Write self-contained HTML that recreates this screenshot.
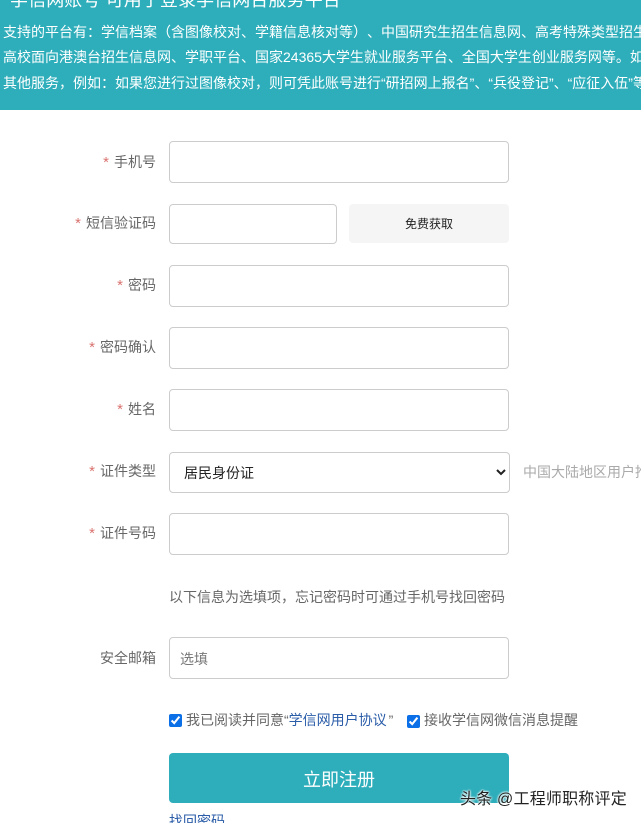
<!DOCTYPE html>
<html lang="zh"><head><meta charset="utf-8"><title>学信网注册</title>
<style>
html,body{margin:0;padding:0;background:#fff;width:641px;height:823px;overflow:hidden}
body{position:relative;font-family:"Liberation Sans","Noto Sans CJK SC",sans-serif;font-size:14px;color:#666;text-spacing-trim:space-all}
#p{position:absolute;left:0;top:0;width:641px;height:823px;overflow:hidden}
.hd{position:absolute;left:0;top:0;width:641px;height:110px;background:#2eaebb;overflow:hidden;color:#fff}
.hd div{position:absolute;left:3px;white-space:nowrap;line-height:20px}
.hd .t{left:10px;top:-10px;font-size:18px;letter-spacing:.1px}
.l{position:absolute;right:485px;white-space:nowrap;line-height:20px;color:#666}
.l i{font-style:normal;color:#d9736f;margin-right:5px;font-family:"Liberation Sans",sans-serif;font-size:15px}
.i{position:absolute;left:169px;width:338px;height:40px;border:1px solid #ccc;border-radius:4px;background:#fff}
.s{position:absolute;left:169px;top:452px;width:341px;height:41px;box-sizing:border-box;border:1px solid #ccc;border-radius:4px;background:#fff;color:#222;font:14px "Liberation Sans","Noto Sans CJK SC",sans-serif;padding:1px 0 0 10px}
.x{position:absolute;white-space:nowrap;line-height:20px}
input[type=checkbox]{position:absolute;margin:0;width:13px;height:13px;accent-color:#0b6fe8}
.b{position:absolute;left:169px;top:753px;width:340px;height:50px;background:#2eaebb;border-radius:4px;color:#fff;font-size:18px;line-height:54px;text-align:center}
.w{position:absolute;left:460px;top:790px;font-size:16px;line-height:20px;color:#222;white-space:nowrap;letter-spacing:.2px;text-shadow:0 0 2px #fff,0 0 2px #fff,0 0 2px #fff}
</style></head><body><div id="p">
<div class="hd">
<div class="t">学信网账号 可用于登录学信网台服务平台</div>
<div style="top:22px">支持的平台有&#xFF1A;学信档案&#xFF08;含图像校对、学籍信息核对等&#xFF09;、中国研究生招生信息网、高考特殊类型招生</div>
<div style="top:47px">高校面向港澳台招生信息网、学职平台、国家24365大学生就业服务平台、全国大学生创业服务网等。如</div>
<div style="top:73px">其他服务&#xFF0C;例如&#xFF1A;如果您进行过图像校对&#xFF0C;则可凭此账号进行“研招网上报名”、“兵役登记”、“应征入伍”等</div>
</div>
<div class="l" style="top:152px"><i>*</i>手机号</div><div class="i" style="top:141px"></div>
<div class="l" style="top:213px"><i>*</i>短信验证码</div><div class="i" style="top:204px;width:166px;height:38px"></div>
<div class="x" style="left:349px;top:204px;width:160px;height:39px;line-height:40px;background:#f5f5f5;border-radius:4px;text-align:center;color:#222;font-size:12px">免费获取</div>
<div class="l" style="top:275px"><i>*</i>密码</div><div class="i" style="top:265px"></div>
<div class="l" style="top:337px"><i>*</i>密码确认</div><div class="i" style="top:327px"></div>
<div class="l" style="top:399px"><i>*</i>姓名</div><div class="i" style="top:389px"></div>
<div class="l" style="top:461px"><i>*</i>证件类型</div>
<select class="s"><option>居民身份证</option></select>
<div class="x" style="left:523px;top:462px;color:#aaa">中国大陆地区用户推荐</div>
<div class="l" style="top:523px"><i>*</i>证件号码</div><div class="i" style="top:513px"></div>
<div class="x" style="left:169px;top:587px">以下信息为选填项&#xFF0C;忘记密码时可通过手机号找回密码</div>
<div class="l" style="top:648px">安全邮箱</div><div class="i" style="top:637px"></div>
<div class="x" style="left:180px;top:649px;color:#777">选填</div>
<input type="checkbox" checked style="left:169px;top:714px">
<div class="x" style="left:186px;top:710px">我已阅读并同意“<span style="color:#2a5ca8;margin:0 2px 0 0">学信网用户协议</span>”</div>
<input type="checkbox" checked style="left:407px;top:715px">
<div class="x" style="left:424px;top:710px">接收学信网微信消息提醒</div>
<div class="b">立即注册</div>
<div class="x" style="left:169px;top:811px;color:#2a5ca8">找回密码</div>
<div class="w">头条 @工程师职称评定</div>
</div></body></html>
